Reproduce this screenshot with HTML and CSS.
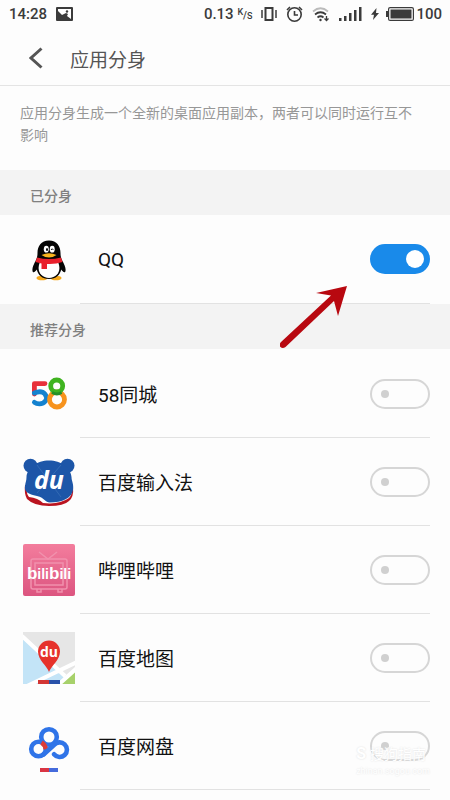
FILE: index.html
```html
<!DOCTYPE html>
<html lang="zh-CN">
<head>
<meta charset="utf-8">
<meta name="viewport" content="width=device-width, initial-scale=1">
<title>应用分身</title>
<link rel="stylesheet" href="styles.css">
</head>
<body>
<div class="screen">
  <div class="status">
    <span>14:28</span>
    <svg class="status-photo" width="17" height="14" viewBox="0 0 17 14" aria-hidden="true"><rect width="17" height="14" rx="1" fill="#3b3b3b"/><path d="M2 2h13v10l-4-3 1-2-2-1-4 2-4-4z" fill="#fff"/><path d="M2 5l4 4 4-2-1 2 4 3H2z" fill="#3b3b3b"/><circle cx="11" cy="4.500" r="1.200" fill="#3b3b3b"/></svg>
    <div class="status-right">
      <span class="speed">0.13 <span class="unit"><sup>K</sup>/<sub>S</sub></span></span>
      <svg width="16" height="14" viewBox="0 0 16 14" fill="none" stroke="#3b3b3b" aria-hidden="true"><rect x="4.500" y="1" width="7" height="12" stroke-width="2"/><path d="M1 3v8M15 3v8" stroke-width="1.500"/></svg>
      <svg width="17" height="16" viewBox="0 0 17 16" fill="none" stroke="#3b3b3b" stroke-width="1.600" aria-hidden="true"><circle cx="8.500" cy="8.500" r="6.700"/><path d="M8.500 5v4H12M1 4l3-3M13 1l3 3"/></svg>
      <svg width="18" height="15" viewBox="0 0 18 15" fill="none" stroke="#3b3b3b" stroke-width="1.700" aria-hidden="true"><path d="M1 4.500Q8.500-2 16 4.500" stroke="#bbb"/><path d="M3 7.500q5.500-4.500 11 0M5.500 10.500q3-2.500 6 0"/><circle cx="8.500" cy="13" r="1.200" fill="#3b3b3b" stroke="none"/><path d="M14.500 9v4M12.500 11.500l2 2 2-2" stroke-width="1.300"/></svg>
      <svg width="23" height="14" viewBox="0 0 23 14" fill="#3b3b3b" aria-hidden="true"><path d="M0 11h2.500v3H0zM5 9h2.500v5H5zM10 6h2.500v8H10zM15 3h2.500v11H15zM20 0h2.500v14H20z"/></svg>
      <div class="power">
        <svg width="8" height="12" viewBox="0 0 8 12" fill="#3b3b3b" aria-hidden="true"><path d="M5.500 0L0 6.800h3L2 12l6-7H5z"/></svg>
        <svg class="battery" width="28" height="14" viewBox="0 0 28 14" aria-hidden="true"><rect x="2.600" y=".600" width="24.800" height="12.800" rx="1.500" fill="none" stroke="#3b3b3b" stroke-width="1.200"/><rect x="4.500" y="2.500" width="21" height="9" fill="#3b3b3b"/><path d="M0 4h2v6H0z" fill="#3b3b3b"/></svg>
        <span>100</span>
      </div>
    </div>
  </div>

  <header class="header">
    <button class="back" type="button" aria-label="返回"><svg width="14" height="22" viewBox="0 0 14 22" fill="none" stroke="#555" stroke-width="3"><path d="M12.500 1.500L2 11l10.500 9.500"/></svg></button>
    <h1>应用分身</h1>
  </header>

  <main>
    <p class="intro">应用分身生成一个全新的桌面应用副本，两者可以同时运行互不影响</p>

    <h2>已分身</h2>
    <ul class="apps">
      <li class="app">
        <svg class="icon" viewBox="0 0 52 52" aria-hidden="true">
          <ellipse cx="19" cy="44" rx="5.500" ry="2.300" fill="#f5a81c"/><ellipse cx="33" cy="44" rx="5.500" ry="2.300" fill="#f5a81c"/>
          <path d="M26 6.500c-8 0-11.500 6-11.500 12.500 0 3-.5 5-2 8-2 4-4 8-2.700 11 1.200 1 3-1 4-2.500C15 41 19 45 26 45s11-4 12.200-9.500c1 1.500 2.800 3.500 4 2.500 1.300-3-.7-7-2.700-11-1.500-3-2-5-2-8C37.500 12.500 34 6.500 26 6.500z" fill="#050505"/>
          <path d="M17 28h18c2 5 2 9-1 12.500-4 4.500-12 4.500-16 0-3-3.500-3-7.500-1-12.500z" fill="#fff"/>
          <ellipse cx="23.300" cy="15.200" rx="2.500" ry="3.400" fill="#fff"/><ellipse cx="29.200" cy="15.200" rx="2.500" ry="3.400" fill="#fff"/>
          <ellipse cx="24" cy="15.500" rx="1" ry="1.600"/><path d="M28 16q1.200-2.500 2.400 0" fill="none" stroke="#000" stroke-width=".9"/>
          <path d="M18.500 21q7.500-3.500 15 0-7.500 5-15 0z" fill="#f8b51e"/>
          <path d="M14 23.500q12 3 24 0l1.500 4.500q-7 2.500-15.500 2v5h-5.500v-5.500l-6-1.500z" fill="#e9202c"/>
        </svg>
        <div class="row"><label for="qq">QQ</label><input class="switch" id="qq" type="checkbox" role="switch" checked></div>
      </li>
    </ul>

    <h2>推荐分身</h2>
    <ul class="apps suggested">
      <li class="app">
        <svg class="icon" viewBox="0 0 52 52" fill="none" stroke-width="4.800" aria-hidden="true">
          <path d="M22 15.600H11.400V26" stroke="#e8303a" stroke-linejoin="round" stroke-linecap="round"/>
          <path d="M11.400 25q7-3 10.500 1c4 5-.5 9.800-5.500 9.800q-3 0-5-1.500" stroke="#1482cf" stroke-linecap="round"/>
          <circle cx="34" cy="31.500" r="7.500" stroke="#f7931d"/>
          <circle cx="33.700" cy="18" r="6" stroke="#3fb320"/>
          <path d="M29 24.500q5 3 9.500 0" stroke="#258e28" stroke-width="3"/>
        </svg>
        <div class="row"><label for="city">58同城</label><input class="switch" id="city" type="checkbox" role="switch"></div>
      </li>
      <li class="app">
        <svg class="icon" viewBox="0 0 52 52" aria-hidden="true">
          <path d="M2 29q-1 9 2 14 7 7 22 7t20-5q5-4 4-14z" fill="#ba1420"/>
          <path d="M4 30q-1 8 2 11 9 1 14 6 16 2 26-5 4-4 3-13z" fill="#fff"/>
          <g fill="#1d56a8"><circle cx="7.500" cy="9.700" r="7"/><circle cx="44.500" cy="9.700" r="7"/><path d="M26 4.500C38 4.500 48 12 48.500 21c0 4 2.500 7 1.500 13-1 8-11 12.500-23 12.500-5 0-5-4.500-13-6.500-9-2-13-4-12-10 .5-4 1.500-5 1.500-9C4 12 14 4.500 26 4.500z"/></g>
          <path d="M14 9l24 32M38 9L14 37" stroke="#3970b8" stroke-width=".8"/>
          <text class="du-keyboard" x="26" y="33" text-anchor="middle">du</text>
        </svg>
        <div class="row"><label for="keyboard">百度输入法</label><input class="switch" id="keyboard" type="checkbox" role="switch"></div>
      </li>
      <li class="app">
        <svg class="icon" viewBox="0 0 52 52" aria-hidden="true">
          <defs><linearGradient id="pink" x2="0" y2="1"><stop stop-color="#f37d9d"/><stop offset="1" stop-color="#dc5580"/></linearGradient></defs>
          <rect width="52" height="52" rx="2" fill="url(#pink)"/>
          <g fill="none" stroke="#f191ad" stroke-width="1.500"><rect x="8" y="15" width="36" height="30" rx="2"/><rect x="12" y="19" width="28" height="22"/><path d="M16 8l9 7 9-7M14 45v3h4v-3M35 45v3h4v-3"/></g>
          <text class="bili" x="26" y="35" text-anchor="middle"><tspan class="tall">b</tspan>ili<tspan class="tall">b</tspan>ili</text>
        </svg>
        <div class="row"><label for="bili">哔哩哔哩</label><input class="switch" id="bili" type="checkbox" role="switch"></div>
      </li>
      <li class="app">
        <svg class="icon" viewBox="0 0 52 52" aria-hidden="true">
          <path d="M0 0h52v52H0z" fill="#e6e6e6"/>
          <path d="M0 4l43 42-7 6H0z" fill="#c3e4f7"/>
          <path d="M36 52l16-15v15z" fill="#a7d16b"/>
          <path d="M-1 4l43 40M2 55l52-25M34 54l20-18" fill="none" stroke="#fff" stroke-width="4"/>
          <path d="M15 48h11v4H15z" fill="#d33634"/><path d="M26 48h11v4H26z" fill="#2952aa"/>
          <path d="M26 40c-2-6-11-12-11-20.500a11 11 0 0 1 22 0C37 28 28 34 26 40z" fill="#e6322b"/>
          <text class="du-map" x="26" y="25" text-anchor="middle">du</text>
        </svg>
        <div class="row"><label for="map">百度地图</label><input class="switch" id="map" type="checkbox" role="switch"></div>
      </li>
      <li class="app">
        <svg class="icon" viewBox="0 0 52 52" fill="none" stroke="#2f74e8" stroke-width="4.600" aria-hidden="true">
          <circle cx="26" cy="17" r="7.800"/>
          <circle cx="15.500" cy="29" r="7.300"/>
          <path d="M18.500 22.500q4 2.500 4.200 7" stroke="#dc3c38" stroke-width="4.500"/>
          <path d="M20.500 34.500l10.500-9.500a7.300 7.300 0 1 1 0 9.300" stroke-linecap="round" stroke-linejoin="round"/>
          <path d="M17 50h9" stroke="#d93543" stroke-width="4"/><path d="M26 50h9" stroke="#456bdc" stroke-width="4"/>
        </svg>
        <div class="row"><label for="disk">百度网盘</label><input class="switch" id="disk" type="checkbox" role="switch"></div>
      </li>
    </ul>
  </main>

  <svg class="arrow" width="70" height="66" viewBox="0 0 70 66" aria-hidden="true"><path d="M67 3L36 10l15 2.500L1 59q-2.500 3-.5 5t5 0L54 18l4 15z" fill="#b80810"/></svg>
  <div class="watermark">
    <div class="mark-name"><span class="mark-logo">S</span>搜狗指南</div>
    <div class="mark-site">zhinan.sogou.com</div>
  </div>
</div>
</body>
</html>
```
FILE: styles.css
```css
* { box-sizing: border-box; }

body {
  margin: 0;
  background: #fdfdfd;
  color: #111;
  font-family: Roboto, "Noto Sans CJK SC", sans-serif;
}

svg { display: block; flex: none; }

.screen {
  position: relative;
  min-height: 100vh;
  overflow: hidden;
}

.status {
  display: flex;
  align-items: center;
  height: 28px;
  padding: 0 8px 0 9px;
  color: #3b3b3b;
  font-size: 15px;
  font-weight: 500;
}

.status-photo { margin-left: 9px; }

.status-right {
  display: flex;
  align-items: center;
  gap: 9px;
  margin-left: auto;
}

.speed { white-space: nowrap; }
.unit { font-size: 10px; }
.unit sup, .unit sub { font-size: 9px; line-height: 1; }
.unit sup { vertical-align: 4px; }
.unit sub { vertical-align: 0; }

.power { display: flex; align-items: center; }
.battery { margin: 0 2px 0 7px; }

.header {
  display: flex;
  align-items: center;
  height: 58px;
  padding: 3px 0 0 16px;
  border-bottom: 1px solid #e4e4e4;
}

.back {
  display: grid;
  place-items: center;
  width: 40px;
  height: 44px;
  margin-right: 14px;
  padding: 0;
  border: 0;
  background: none;
}

h1, h2, p, ul { margin: 0; padding: 0; }

h1 {
  color: #555;
  font-size: 19px;
  font-weight: 400;
}

.intro {
  padding: 16px 28px 24px 20px;
  color: #979797;
  font-size: 14px;
  line-height: 22px;
}

h2 {
  height: 45px;
  padding: 4px 30px 0;
  background: #f3f3f3;
  color: #808080;
  font-size: 14px;
  font-weight: 500;
  line-height: 44px;
}

.apps { list-style: none; }
.suggested { padding-top: 1px; }

.app {
  display: flex;
  align-items: center;
  height: 88px;
  padding: 0 20px 0 23px;
}

.apps:first-of-type .app { height: 89px; }
.suggested .app { height: 88px; }

.icon { width: 52px; height: 52px; }

.row {
  display: flex;
  flex: 1;
  align-items: center;
  justify-content: space-between;
  align-self: stretch;
  margin-left: 5px;
  padding-left: 18px;
  border-bottom: 1px solid #e2e2e2;
  font-size: 19px;
}

.switch {
  appearance: none;
  display: flex;
  align-items: center;
  width: 60px;
  height: 30px;
  margin: 0;
  padding: 0 9px;
  border: 2px solid #d6d6d6;
  border-radius: 15px;
}

.switch::before {
  content: "";
  width: 8px;
  height: 8px;
  border-radius: 50%;
  background: #d0d0d0;
}

.switch:checked {
  justify-content: flex-end;
  padding: 0 4px;
  border-color: #198aea;
  background: #198aea;
}

.switch:checked::before {
  width: 18px;
  height: 18px;
  background: #fff;
}

.du-keyboard {
  fill: #fff;
  font: italic 700 25px "Open Sans", sans-serif;
}

.du-map {
  fill: #fff;
  font: 700 14px "Open Sans", sans-serif;
}

.bili {
  fill: #fff;
  font: 700 14px "Liberation Sans", sans-serif;
}

.bili .tall { font-size: 17px; }

.arrow {
  position: absolute;
  top: 283px;
  left: 280px;
}

.watermark {
  position: absolute;
  top: 743px;
  right: 20px;
  color: #fff;
  text-shadow: 0 0 2px #ddd;
  pointer-events: none;
}

.mark-name {
  display: flex;
  align-items: center;
  gap: 4px;
  font-size: 14px;
  line-height: 22px;
}

.mark-logo { font-size: 16px; font-weight: 700; }
.mark-site { font-size: 9px; line-height: 12px; }
```
